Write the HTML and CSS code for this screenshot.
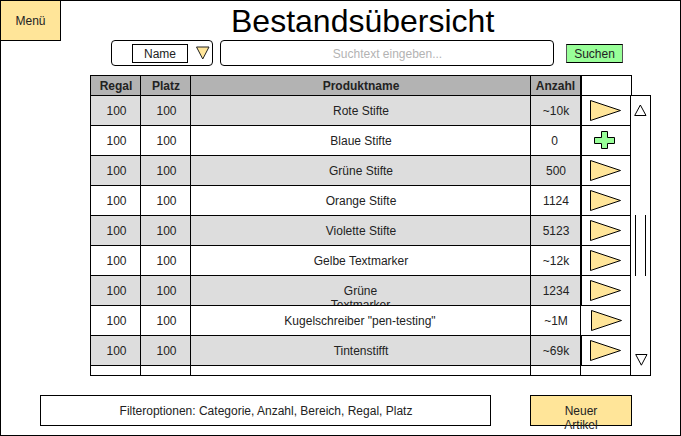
FILE: index.html
```html
<!DOCTYPE html>
<html lang="de">
<head>
<meta charset="utf-8">
<title>Bestandsübersicht</title>
<link rel="stylesheet" href="styles.css">
</head>
<body>
<svg class="defs" width="0" height="0" aria-hidden="true">
  <symbol id="go" viewBox="0 0 32 22"><path d="M.5 .5L30.5 10.5L.5 20.5Z" fill="#ffe599" stroke="#000"/></symbol>
  <symbol id="plus" viewBox="0 0 32 22"><path d="M4.5 7.5h7v-6h6v6h7v6h-7v5h-6v-5h-7z" fill="#99ff99" stroke="#000"/></symbol>
</svg>
<main class="page">
  <header class="top">
    <button class="menu">Menü</button>
    <h1>Bestandsübersicht</h1>
  </header>
  <section class="search">
    <div class="field"><span class="name">Name</span><svg class="drop" width="15" height="15"><path d="M1.5 2H14L7.75 14Z" fill="#ffe599" stroke="#222"/></svg></div>
    <div class="query">Suchtext eingeben...</div>
    <button class="submit">Suchen</button>
  </section>
  <section class="stock">
    <div class="list">
      <div class="row head"><b>Regal</b><b>Platz</b><b>Produktname</b><b>Anzahl</b><i></i></div>
      <div class="row"><span>100</span><span>100</span><span>Rote Stifte</span><span>~10k</span><i><svg><use href="#go"/></svg></i></div>
      <div class="row"><span>100</span><span>100</span><span>Blaue Stifte</span><span class="mid">0</span><i><svg><use href="#plus"/></svg></i></div>
      <div class="row"><span>100</span><span>100</span><span>Grüne Stifte</span><span>500</span><i><svg><use href="#go"/></svg></i></div>
      <div class="row"><span>100</span><span>100</span><span>Orange Stifte</span><span>1124</span><i><svg><use href="#go"/></svg></i></div>
      <div class="row"><span>100</span><span>100</span><span>Violette Stifte</span><span>5123</span><i><svg><use href="#go"/></svg></i></div>
      <div class="row"><span>100</span><span>100</span><span>Gelbe Textmarker</span><span>~12k</span><i><svg><use href="#go"/></svg></i></div>
      <div class="row"><span>100</span><span>100</span><span class="wrap">Grüne<br>Textmarker</span><span>1234</span><i><svg><use href="#go"/></svg></i></div>
      <div class="row"><span>100</span><span>100</span><span class="long">Kugelschreiber "pen-testing"</span><span>~1M</span><i class="thin"><svg><use href="#go"/></svg></i></div>
      <div class="row"><span>100</span><span>100</span><span>Tintenstifft</span><span>~69k</span><i><svg><use href="#go"/></svg></i></div>
      <div class="row rest"><span></span><span></span><span></span><span></span><i class="thin"></i></div>
    </div>
    <div class="scroll">
      <svg class="up" width="14" height="13"><path d="M.7 11.5H12L6.35 1Z" fill="#fff" stroke="#000"/></svg>
      <div class="thumb"></div>
      <svg class="down" width="14" height="13"><path d="M.7 .5H12L6.35 11.2Z" fill="#fff" stroke="#000"/></svg>
    </div>
  </section>
  <footer class="bottom">
    <div class="filter">Filteroptionen: Categorie, Anzahl, Bereich, Regal, Platz</div>
    <button class="new">Neuer<br>Artikel</button>
  </footer>
</main>
</body>
</html>
```
FILE: styles.css
```css
* { box-sizing: border-box; }
body { margin: 0; background: #fff; }
.page {
  width: 681px; height: 436px; border: 1px solid #000; overflow: hidden;
  font: 12px/14px "Liberation Sans", Arial, sans-serif; color: #222;
}
button { font: inherit; color: inherit; padding: 0; border: 1px solid #000; border-radius: 0; }
.defs { display: block; }
.top { display: flex; height: 39px; }
.menu { width: 60px; height: 40px; flex: none; background: #ffe599; border-width: 0 1px 1px 0; }
h1 { margin: 1px 0 0 170px; font-size: 32px; line-height: 38px; font-weight: 400; color: #000; white-space: nowrap; }
.search { display: flex; height: 26px; margin-left: 110px; }
.field { display: flex; width: 102px; border: 1px solid #000; border-radius: 4px; padding: 3px 0 0 20px; }
.name { width: 56px; height: 19px; border: 1px solid #000; line-height: 18px; text-align: center; }
.drop { margin: 1px 0 0 7px; }
.query { width: 334px; margin-left: 7px; border: 1px solid #000; border-radius: 4px; line-height: 26px; text-align: center; color: #b3b3b3; padding-left: 1px; }
.submit { width: 57px; height: 19px; margin: 4px 0 0 12px; background: #99ff99; border-color: #000 #555; line-height: 17px; padding-top: 1px; }
.stock { display: flex; align-items: flex-end; height: 301px; margin: 9px 0 0 89px; }
.list { width: 540px; height: 301px; border-bottom: 1px solid #000; }
.row { display: grid; grid-template-columns: 50px 50px 340px 50px 50px; height: 30px; border-top: 1px solid #000; background: #fff; }
.row > * { border-left: 1px solid #000; text-align: center; font-style: normal; line-height: 30px; padding-left: 2px; overflow: hidden; white-space: nowrap; }
.row > :nth-child(3) { padding-left: 1px; }
.row > :nth-child(4) { padding-left: 1px; }
.row > .mid { padding: 0 2px 0 0; }
.row > .long { padding: 0 1px 0 0; }
.row:nth-child(even) > span { background: #ddd; }
.row > i { border-left-width: 2px; padding: 4px 0 0 8px; }
.row > .thin { border-left-width: 1px; padding-left: 10px; }
.row svg { display: block; width: 32px; height: 22px; }
.row > .wrap { line-height: 14px; padding-top: 8px; padding-left: 0; }
.head { width: 542px; height: 20px; border-right: 1px solid #000; }
.row.head > b { background: #b3b3b3; line-height: 20px; padding-left: 1px; }
.row.head > b:nth-child(4) { padding-left: 0; }
.row.rest { height: 10px; }
.row.rest > span { background: #fff; }
.scroll { width: 21px; height: 281px; border: 1px solid #000; display: flex; flex-direction: column; padding: 8px 0 8px 3px; }
.thumb { width: 11px; height: 61px; margin: 98px 0 auto 1px; border: solid #000; border-width: 0 1px; }
.down { margin-left: 1px; }
.bottom { display: flex; height: 31px; margin: 19px 0 0 39px; }
.filter { width: 451px; border: 1px solid #000; line-height: 30px; text-align: center; padding-left: 1px; }
.new { width: 102px; margin-left: 39px; background: #ffe599; padding-top: 8px; display: flex; justify-content: center; }
```
